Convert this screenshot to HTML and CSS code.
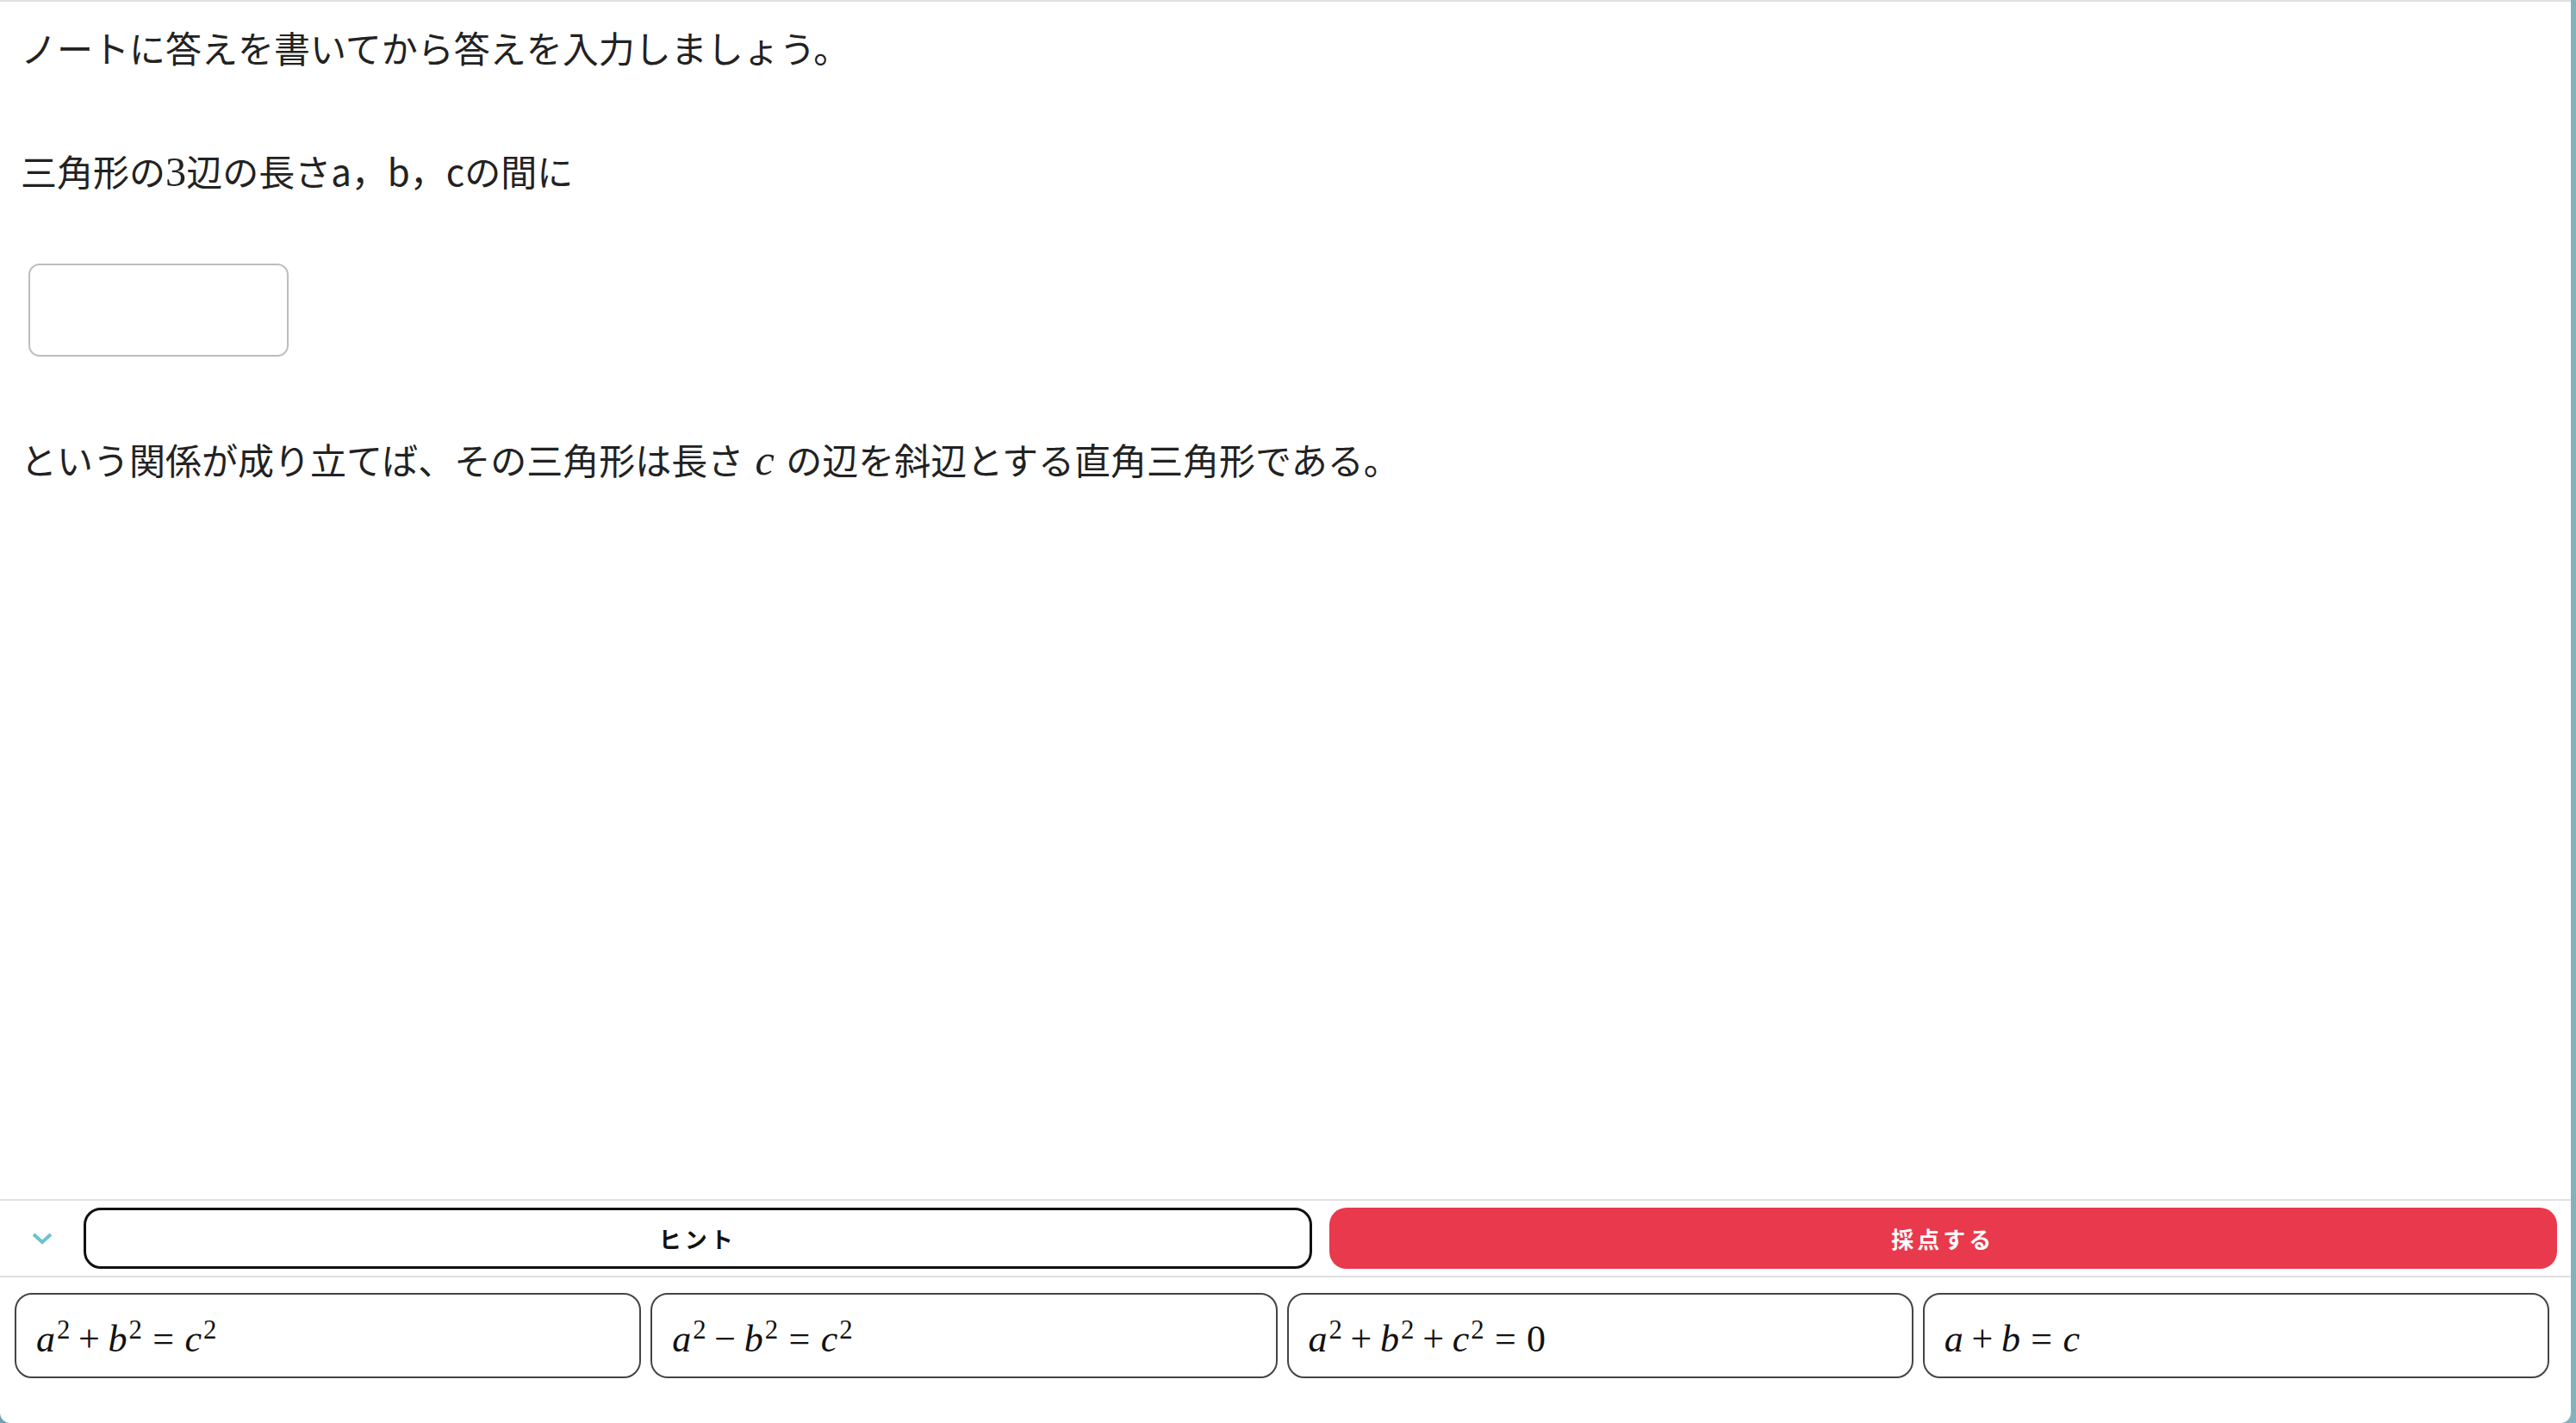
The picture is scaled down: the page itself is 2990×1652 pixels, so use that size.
FILE: index.html
```html
<!DOCTYPE html>
<html lang="ja">
<head>
<meta charset="utf-8">
<title>問題</title>
<link rel="stylesheet" href="styles.css">
</head>
<body>
<div class="panel">
  <main class="content">
    <p class="text line-first">ノートに答えを書いてから答えを入力しましょう。</p>
    <p class="text line-second">三角形の<span class="mnum">3</span>辺の長さa，b，cの間に</p>
    <div class="answer-row"><div class="answer-box"></div></div>
    <p class="text line-third">という関係が成り立てば、その三角形は長さ <span class="mvar">c</span> の辺を斜辺とする直角三角形である。</p>
  </main>
  <div class="toolbar">
    <div class="toggle">
      <svg width="24" height="14" viewBox="0 0 24 14"><polyline points="2,2 12,11 22,2" fill="none" stroke="#6cc3cf" stroke-width="4"/></svg>
    </div>
    <div class="actions">
      <button class="btn btn-hint">ヒント</button>
      <button class="btn btn-grade">採点する</button>
    </div>
  </div>
  <div class="choices">
    <div class="choice"><span class="math"><i>a</i><sup>2</sup><span class="bin">+</span><i>b</i><sup>2</sup><span class="rel">=</span><i>c</i><sup>2</sup></span></div>
    <div class="choice"><span class="math"><i>a</i><sup>2</sup><span class="bin">−</span><i>b</i><sup>2</sup><span class="rel">=</span><i>c</i><sup>2</sup></span></div>
    <div class="choice"><span class="math"><i>a</i><sup>2</sup><span class="bin">+</span><i>b</i><sup>2</sup><span class="bin">+</span><i>c</i><sup>2</sup><span class="rel">=</span>0</span></div>
    <div class="choice"><span class="math"><i>a</i><span class="bin">+</span><i>b</i><span class="rel">=</span><i>c</i></span></div>
  </div>
</div>
</body>
</html>
```

FILE: styles.css
```css
html, body {
  margin: 0;
  padding: 0;
  height: 100%;
}
body {
  background: linear-gradient(90deg, #6fa3ad 0%, #82b3bc 100%);
  font-family: "Noto Sans CJK JP", "Noto Sans", sans-serif;
  color: #222;
}
.panel {
  box-sizing: border-box;
  width: calc(100% - 6px);
  height: 100vh;
  background: #fff;
  border-top: 2px solid #e0e0e0;
  border-radius: 0 0 12px 12px;
  display: flex;
  flex-direction: column;
  overflow: hidden;
}
.content {
  flex: 1;
  padding: 21px 24px 0 24px;
}
.text {
  margin: 0;
  font-size: 42px;
  line-height: 63px;
  white-space: nowrap;
}
.line-second {
  margin-top: 80px;
}
.answer-row {
  margin-top: 75px;
  padding-left: 9px;
}
.answer-box {
  box-sizing: border-box;
  width: 302px;
  height: 108px;
  border: 2px solid #bdbdbd;
  border-radius: 13px;
}
.line-third {
  margin-top: 87px;
}
.mnum {
  font-family: "Liberation Serif", serif;
  font-size: 1.15em;
}
.mvar {
  font-family: "Liberation Serif", serif;
  font-style: italic;
  font-size: 1.2em;
  margin: 0 4px;
}
.toolbar {
  flex: none;
  display: flex;
  align-items: stretch;
  padding: 8px 16px 8px 0;
  border-top: 2px solid #e0e0e0;
  border-bottom: 2px solid #e0e0e0;
}
.toggle {
  width: 97px;
  flex: none;
  display: flex;
  align-items: center;
  justify-content: flex-start;
  padding-left: 37px;
  box-sizing: border-box;
}
.actions {
  flex: 1;
  display: grid;
  grid-template-columns: 1fr 1fr;
  gap: 20px;
}
.btn {
  height: 71px;
  box-sizing: border-box;
  border-radius: 20px;
  font-family: "Noto Sans CJK JP", sans-serif;
  font-size: 26px;
  font-weight: 700;
  letter-spacing: 4px;
  cursor: pointer;
}
.btn-hint {
  background: #fff;
  border: 3px solid #111;
  color: #111;
}
.btn-grade {
  background: #e9394c;
  border: none;
  color: #fff;
}
.choices {
  flex: none;
  display: grid;
  grid-template-columns: repeat(4, 1fr);
  gap: 11px;
  padding: 18px 25px 52px 17px;
}
.choice {
  box-sizing: border-box;
  height: 99px;
  border: 2px solid #444;
  border-radius: 20px;
  display: flex;
  align-items: center;
  padding: 8px 23px 0 23px;
}
.math {
  font-family: "Liberation Serif", serif;
  font-size: 44px;
  line-height: 60px;
  color: #111;
  white-space: nowrap;
}
.math i {
  font-style: italic;
}
.math sup {
  font-size: 0.7em;
  vertical-align: 0.46em;
  line-height: 0;
  margin-left: 2px;
}
.math .bin {
  margin: 0 0.22em;
}
.math .rel {
  margin: 0 0.28em;
}
```
